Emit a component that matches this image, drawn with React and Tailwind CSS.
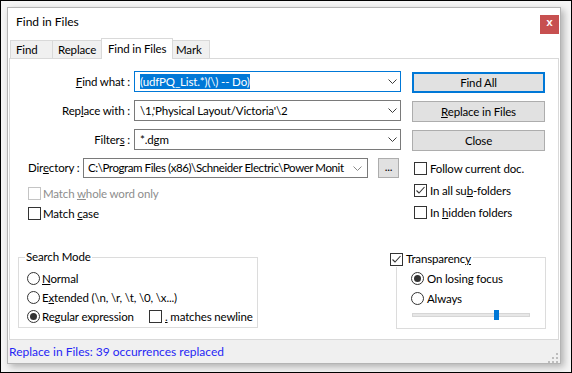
import React from 'react';

const Chevron = ({ light }) => (
  <svg width="9" height="5" viewBox="0 0 9 5" className="shrink-0">
    <polyline points="0.5,0.5 4.5,4.5 8.5,0.5" fill="none" stroke={light ? '#8a8a8a' : '#3c3c3c'} strokeWidth="1" />
  </svg>
);

const Check = ({ checked, disabled }) => (
  <span
    className={`w-[13px] h-[13px] shrink-0 border bg-white flex items-center justify-center ${
      disabled ? 'border-[#c4c4c4]' : 'border-[#333333]'
    }`}
  >
    {checked && (
      <svg width="11" height="11" viewBox="0 0 11 11">
        <polyline points="1.5,5.5 4,8 9.5,2" fill="none" stroke="#333333" strokeWidth="1.1" />
      </svg>
    )}
  </span>
);

const Radio = ({ checked }) => (
  <span className="w-[13px] h-[13px] shrink-0 rounded-full border border-[#333333] bg-white flex items-center justify-center">
    {checked && <span className="w-[7px] h-[7px] rounded-full bg-[#333333]" />}
  </span>
);

const Combo = ({ focused, children }) => (
  <div
    className={`ml-[4px] w-[267px] h-[21px] border flex items-center pl-[5px] pr-[3px] bg-white ${
      focused ? 'border-[#0078d7]' : 'border-[#7a7a7a]'
    }`}
  >
    <div className="flex-1 overflow-hidden whitespace-nowrap leading-[16px]">{children}</div>
    <Chevron />
  </div>
);

const Button = ({ primary, children, className = '' }) => (
  <div
    className={`h-[21px] bg-[#e1e1e1] flex items-center justify-center leading-[16px] ${
      primary ? 'border-2 border-[#0078d7]' : 'border border-[#adadad]'
    } ${className}`}
  >
    {children}
  </div>
);

export default function App() {
  return (
    <div className="w-[572px] h-[373px] border border-black bg-[#f5f5f5] overflow-hidden text-[11.5px] tracking-[-0.15px] text-black font-['Lato','Liberation_Sans',sans-serif]">
      {/* dialog window */}
      <div className="ml-[6px] mt-[6px] w-[554px] h-[357px] border border-[#b4b4b4] bg-white flex flex-col shadow-[3px_3px_7px_rgba(0,0,0,0.28)]">
        {/* title bar */}
        <div className="h-[30px] flex items-start justify-between">
          <span className="ml-[8px] mt-[6px] leading-[16px] text-[12px] tracking-normal">Find in Files</span>
          <div className="mt-[7px] mr-[1px] w-[19px] h-[19px] bg-[#c75050] flex items-center justify-center text-white font-bold text-[11px] leading-none pb-[2px] font-['Liberation_Mono',monospace]">
            x
          </div>
        </div>

        {/* tabs */}
        <div className="h-[20px] flex items-end pl-[2px]">
          <div className="w-[43px] h-[18px] border border-b-0 border-[#d9d9d9] bg-[#f0f0f0] flex items-center pl-[5px] whitespace-nowrap">
            Find
          </div>
          <div className="-ml-px w-[50px] h-[18px] border border-b-0 border-[#d9d9d9] bg-[#f0f0f0] flex items-center pl-[5px] whitespace-nowrap">
            Replace
          </div>
          <div className="-ml-px -mb-px relative z-10 w-[72px] h-[21px] border border-b-0 border-[#d9d9d9] bg-white flex items-center pl-[6px] pb-[1px] whitespace-nowrap">
            Find in Files
          </div>
          <div className="-ml-px w-[38px] h-[18px] border border-b-0 border-[#d9d9d9] bg-[#f0f0f0] flex items-center pl-[3px] whitespace-nowrap">
            Mark
          </div>
        </div>

        {/* tab panel */}
        <div className="mx-px h-[282px] border border-[#d9d9d9] bg-white flex flex-col">
          <div className="h-[198px] flex">
            {/* left column */}
            <div className="w-[391px] flex flex-col">
              <div className="mt-[12px] flex items-center h-[21px]">
                <span className="w-[120px] text-right whitespace-nowrap">
                  <u>F</u>ind what :
                </span>
                <Combo focused>
                  <span className="bg-[#0078d7] text-white py-px">(udfPQ_List.*)(\) -- Do)</span>
                </Combo>
              </div>
              <div className="mt-[8px] flex items-center h-[21px]">
                <span className="w-[120px] text-right whitespace-nowrap">
                  Rep<u>l</u>ace with :
                </span>
                <Combo>\1,'Physical Layout/Victoria'\2</Combo>
              </div>
              <div className="mt-[8px] flex items-center h-[21px]">
                <span className="w-[120px] text-right whitespace-nowrap">
                  Filter<u>s</u> :
                </span>
                <Combo>*.dgm</Combo>
              </div>
              <div className="mt-[8px] flex items-center h-[20px] pl-[18px]">
                <span className="w-[55px] whitespace-nowrap">
                  Dir<u>e</u>ctory :
                </span>
                <div className="w-[285px] h-[20px] border border-[#7a7a7a] flex items-center pl-[4px] pr-[5px]">
                  <div className="flex-1 overflow-hidden whitespace-nowrap leading-[16px] tracking-[-0.42px]">
                    C:\Program Files (x86)\Schneider Electric\Power Monit
                  </div>
                  <span className="ml-[3px]">
                    <Chevron light />
                  </span>
                </div>
                <div className="ml-[10px] w-[21px] h-[20px] bg-[#e1e1e1] border border-[#adadad] flex items-center justify-center leading-none pb-[3px]">
                  ...
                </div>
              </div>
              <div className="mt-[9px] pl-[18px] flex items-center gap-[2px] h-[13px] text-[#8d8d8d]">
                <Check disabled />
                <span className="leading-[16px]">
                  Match <u>w</u>hole word only
                </span>
              </div>
              <div className="mt-[7px] pl-[18px] flex items-center gap-[2px] h-[13px]">
                <Check />
                <span className="leading-[16px]">
                  Match <u>c</u>ase
                </span>
              </div>
            </div>

            {/* right column */}
            <div className="ml-[11px] w-[133px] flex flex-col">
              <Button primary className="mt-[13px]">Find All</Button>
              <Button className="mt-[8px]">
                <span>
                  <u>R</u>eplace in Files
                </span>
              </Button>
              <Button className="mt-[8px]">Close</Button>
              <div className="mt-[11px] ml-[2px] flex items-center gap-[3px] h-[13px] whitespace-nowrap">
                <Check />
                <span className="leading-[16px]">Follow current doc.</span>
              </div>
              <div className="mt-[9px] ml-[2px] flex items-center gap-[3px] h-[13px] whitespace-nowrap">
                <Check checked />
                <span className="leading-[16px]">
                  In all su<u>b</u>-folders
                </span>
              </div>
              <div className="mt-[9px] ml-[2px] flex items-center gap-[3px] h-[13px] whitespace-nowrap">
                <Check />
                <span className="leading-[16px]">
                  In <u>h</u>idden folders
                </span>
              </div>
            </div>
          </div>

          {/* groups */}
          <div className="flex items-start">
            <div className="ml-[8px] w-[240px] h-[71px] border border-[#dcdcdc] relative pl-[8px] pt-[14px] flex flex-col">
              <span className="absolute left-[6px] -top-[9px] px-px bg-white leading-[16px]">Search Mode</span>
              <div className="flex items-center gap-[2px] h-[13px]">
                <Radio />
                <span className="leading-[16px]">
                  <u>N</u>ormal
                </span>
              </div>
              <div className="mt-[6px] flex items-center gap-[2px] h-[13px] whitespace-nowrap">
                <Radio />
                <span className="leading-[16px]">
                  E<u>x</u>tended (\n, \r, \t, \0, \x...)
                </span>
              </div>
              <div className="mt-[6px] flex items-center h-[13px] whitespace-nowrap">
                <div className="w-[122px] flex items-center gap-[2px]">
                  <Radio checked />
                  <span className="leading-[16px]">
                    Re<u>g</u>ular expression
                  </span>
                </div>
                <Check />
                <span className="ml-[3px] leading-[16px]">
                  <u>.</u> matches newline
                </span>
              </div>
            </div>

            <div className="ml-[138px] w-[150px] h-[72px] border border-[#dcdcdc] relative pl-[14px] pt-[14px] flex flex-col">
              <div className="absolute -left-[7px] -top-[7px] h-[16px] pr-[2px] bg-white flex items-center gap-[3px] whitespace-nowrap">
                <Check checked />
                <span className="leading-[16px]">
                  Transparenc<u>y</u>
                </span>
              </div>
              <div className="flex items-center gap-[3px] h-[13px] whitespace-nowrap">
                <Radio checked />
                <span className="leading-[16px]">On losing focus</span>
              </div>
              <div className="mt-[7px] flex items-center gap-[3px] h-[13px]">
                <Radio />
                <span className="leading-[16px]">Always</span>
              </div>
              <div className="mt-[8px] ml-px w-[118px] h-[4px] bg-[#e7e7e7] border border-[#d6d6d6] relative">
                <span className="absolute left-[81px] -top-[4px] w-[5px] h-[10px] bg-[#0078d7]" />
              </div>
            </div>
          </div>
        </div>

        {/* status bar */}
        <div className="flex-1 bg-[#f0f0f0] flex items-center pl-px">
          <span className="text-[#2626f5] leading-[16px] whitespace-nowrap text-[12px] tracking-normal">Replace in Files: 39 occurrences replaced</span>
          <svg width="10" height="10" viewBox="0 0 10 10" className="ml-auto self-end mr-[2px]">
            <rect x="8" y="0" width="2" height="2" fill="#bdbdbd" />
            <rect x="4" y="4" width="2" height="2" fill="#bdbdbd" />
            <rect x="8" y="4" width="2" height="2" fill="#bdbdbd" />
            <rect x="0" y="8" width="2" height="2" fill="#bdbdbd" />
            <rect x="4" y="8" width="2" height="2" fill="#bdbdbd" />
            <rect x="8" y="8" width="2" height="2" fill="#bdbdbd" />
          </svg>
        </div>
      </div>
    </div>
  );
}
